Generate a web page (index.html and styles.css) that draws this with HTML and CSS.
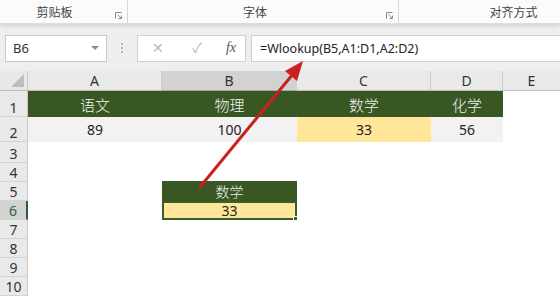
FILE: index.html
```html
<!DOCTYPE html>
<html lang="zh">
<head>
<meta charset="utf-8">
<title>VLOOKUP</title>
<link rel="stylesheet" href="styles.css">
</head>
<body>
<div class="app">
  <div class="ribbon">
    <div class="group g1"><span class="glabel">剪贴板</span><svg class="launcher" viewBox="0 0 7 7" width="7" height="7"><path d="M0.5 6.5V0.5h6" fill="none" stroke="#8a8a8a" stroke-width="1"/><path d="M2.5 2.5l3.5 3.5M6.5 3.5v3h-3" fill="none" stroke="#8a8a8a" stroke-width="1"/></svg></div>
    <div class="group g2"><span class="glabel">字体</span><svg class="launcher" viewBox="0 0 7 7" width="7" height="7"><path d="M0.5 6.5V0.5h6" fill="none" stroke="#8a8a8a" stroke-width="1"/><path d="M2.5 2.5l3.5 3.5M6.5 3.5v3h-3" fill="none" stroke="#8a8a8a" stroke-width="1"/></svg></div>
    <div class="group g3"><span class="glabel">对齐方式</span></div>
  </div>
  <div class="formulabar">
    <div class="namebox"><span>B6</span><span class="dd"></span></div>
    <div class="dots"><i></i><i></i><i></i></div>
    <div class="fxbox">
      <span class="ico x">✕</span>
      <span class="ico ok">✓</span>
      <span class="ico fx"><em>fx</em></span>
    </div>
    <div class="input">=Wlookup(B5,A1:D1,A2:D2)</div>
  </div>
  <div class="sheet">
    <div class="corner"><span class="tri"></span></div>
    <div class="ch">A</div>
    <div class="ch sel">B</div>
    <div class="ch">C</div>
    <div class="ch">D</div>
    <div class="ch last">E</div>

    <div class="rh">1</div>
    <div class="c head">语文</div>
    <div class="c head">物理</div>
    <div class="c head">数学</div>
    <div class="c head">化学</div>
    <div class="c"></div>

    <div class="rh">2</div>
    <div class="c grey">89</div>
    <div class="c grey">100</div>
    <div class="c yellow">33</div>
    <div class="c grey">56</div>
    <div class="c"></div>

    <div class="rh">3</div><div class="c"></div><div class="c"></div><div class="c"></div><div class="c"></div><div class="c"></div>
    <div class="rh">4</div><div class="c"></div><div class="c"></div><div class="c"></div><div class="c"></div><div class="c"></div>

    <div class="rh">5</div>
    <div class="c"></div>
    <div class="c head small">数学</div>
    <div class="c"></div><div class="c"></div><div class="c"></div>

    <div class="rh sel">6</div>
    <div class="c"></div>
    <div class="c yellow active">33<span class="handle"></span></div>
    <div class="c"></div><div class="c"></div><div class="c"></div>

    <div class="rh">7</div><div class="c"></div><div class="c"></div><div class="c"></div><div class="c"></div><div class="c"></div>
    <div class="rh">8</div><div class="c"></div><div class="c"></div><div class="c"></div><div class="c"></div><div class="c"></div>
    <div class="rh">9</div><div class="c"></div><div class="c"></div><div class="c"></div><div class="c"></div><div class="c"></div>
    <div class="rh">10</div><div class="c"></div><div class="c"></div><div class="c"></div><div class="c"></div><div class="c"></div>
  </div>
  <svg class="arrow" width="560" height="299" viewBox="0 0 560 299">
    <line x1="200" y1="187" x2="293" y2="74" stroke="#c9211e" stroke-width="3" stroke-linecap="round"/>
    <polygon points="303,61 297,81 285,71" fill="#c9211e"/>
  </svg>
</div>
</body>
</html>
```

FILE: styles.css
```css
* { box-sizing: border-box; }
html, body { margin: 0; padding: 0; background: #ffffff; }
body { width: 560px; height: 299px; overflow: hidden; font-family: "Noto Sans", "Noto Sans CJK SC", sans-serif; }
.app { position: relative; width: 560px; height: 299px; overflow: hidden; background: #fff; }

.ribbon { display: flex; height: 24px; background: #fbfbfb; border-bottom: 1px solid #dcdcdc; box-shadow: 0 2px 4px rgba(0,0,0,0.12); position: relative; z-index: 1; }
.group { position: relative; display: flex; align-items: center; justify-content: center; height: 24px; border-right: 1px solid #d6d6d6; }
.g1 { width: 128px; padding-right: 18px; }
.g2 { width: 271px; padding-right: 16px; }
.g3 { flex: 1; border-right: none; padding-left: 68px; justify-content: center; }
.glabel { font-family: "Noto Sans CJK SC", sans-serif; font-size: 12px; color: #444; line-height: 1; margin-top: -1px; }
.launcher { position: absolute; right: 5px; top: 12px; }

.formulabar { display: flex; align-items: center; height: 47px; padding: 10px 0 9px 5px; background: #eeeeee; }
.namebox { width: 102px; height: 27px; background: #fff; border: 1px solid #c8c8c8; display: flex; align-items: center; justify-content: space-between; padding: 0 7px 0 7px; font-size: 13px; color: #333; }
.dd { width: 0; height: 0; border-left: 4px solid transparent; border-right: 4px solid transparent; border-top: 4px solid #8a8a8a; }
.dots { width: 30px; display: flex; flex-direction: column; align-items: center; gap: 2px; }
.dots i { display: block; width: 2px; height: 2px; background: #b5b5b5; }
.fxbox { width: 109px; height: 27px; background: #fff; border: 1px solid #d0d0d0; display: flex; align-items: center; justify-content: space-between; padding: 0 9px 0 14px; }
.ico { color: #b8b8b8; font-size: 14px; line-height: 1; }
.ico.ok { margin-left: 4px; }
.ico.fx { color: #555; font-family: "Liberation Serif", serif; font-size: 14px; }
.input { flex: 1; height: 27px; margin-left: 5px; background: #fff; border: 1px solid #d0d0d0; border-right: none; display: flex; align-items: center; padding-left: 8px; font-size: 12.5px; color: #222; }

.sheet { display: grid; grid-template-columns: 28px 134px 135px 134px 72px 1fr; grid-template-rows: 20px 26px 25px 21px 19px 19px 19px 19px 19px 19px 19px; }
.corner { background: #e8e8e8; border-right: 1px solid #c9c9c9; border-bottom: 1px solid #bdbdbd; position: relative; }
.tri { position: absolute; right: 3px; bottom: 3px; width: 0; height: 0; border-left: 13px solid transparent; border-bottom: 13px solid #bdbdbd; }
.ch { background: #e9e9e9; border-right: 1px solid #cfcfcf; border-bottom: 1px solid #bdbdbd; display: flex; align-items: flex-end; justify-content: center; font-size: 14px; color: #333; line-height: 1; padding-bottom: 2px; }
.ch.sel { background: #d2d2d2; border-bottom: 1px solid #a7a7a7; }
.ch.last { border-right: none; }
.rh { background: #e9e9e9; border-right: 1px solid #c9c9c9; border-bottom: 1px solid #d3d3d3; display: flex; align-items: flex-end; justify-content: center; font-size: 14px; color: #333; line-height: 1; padding-bottom: 1px; }
.rh.sel { background: #d2d2d2; border-right: 2px solid #2f5d3a; color: #2f5d3a; }
.c { background: #fff; display: flex; align-items: center; justify-content: center; font-size: 14px; color: #222; position: relative; }
.c.head { background: #385723; color: #f2f2f2; font-family: "Noto Sans CJK SC", sans-serif; font-weight: 300; font-size: 15px; }
.c.head.small { font-size: 14px; margin-top: -1px; }
.c.grey { background: #f2f2f2; }
.c.yellow { background: #ffe699; }
.c.active { border: 2px solid #3a5f2a; }
.handle { position: absolute; right: -4px; bottom: -4px; width: 6px; height: 6px; background: #2f5d3a; border: 1px solid #fff; }

.arrow { position: absolute; left: 0; top: 0; pointer-events: none; }
```
